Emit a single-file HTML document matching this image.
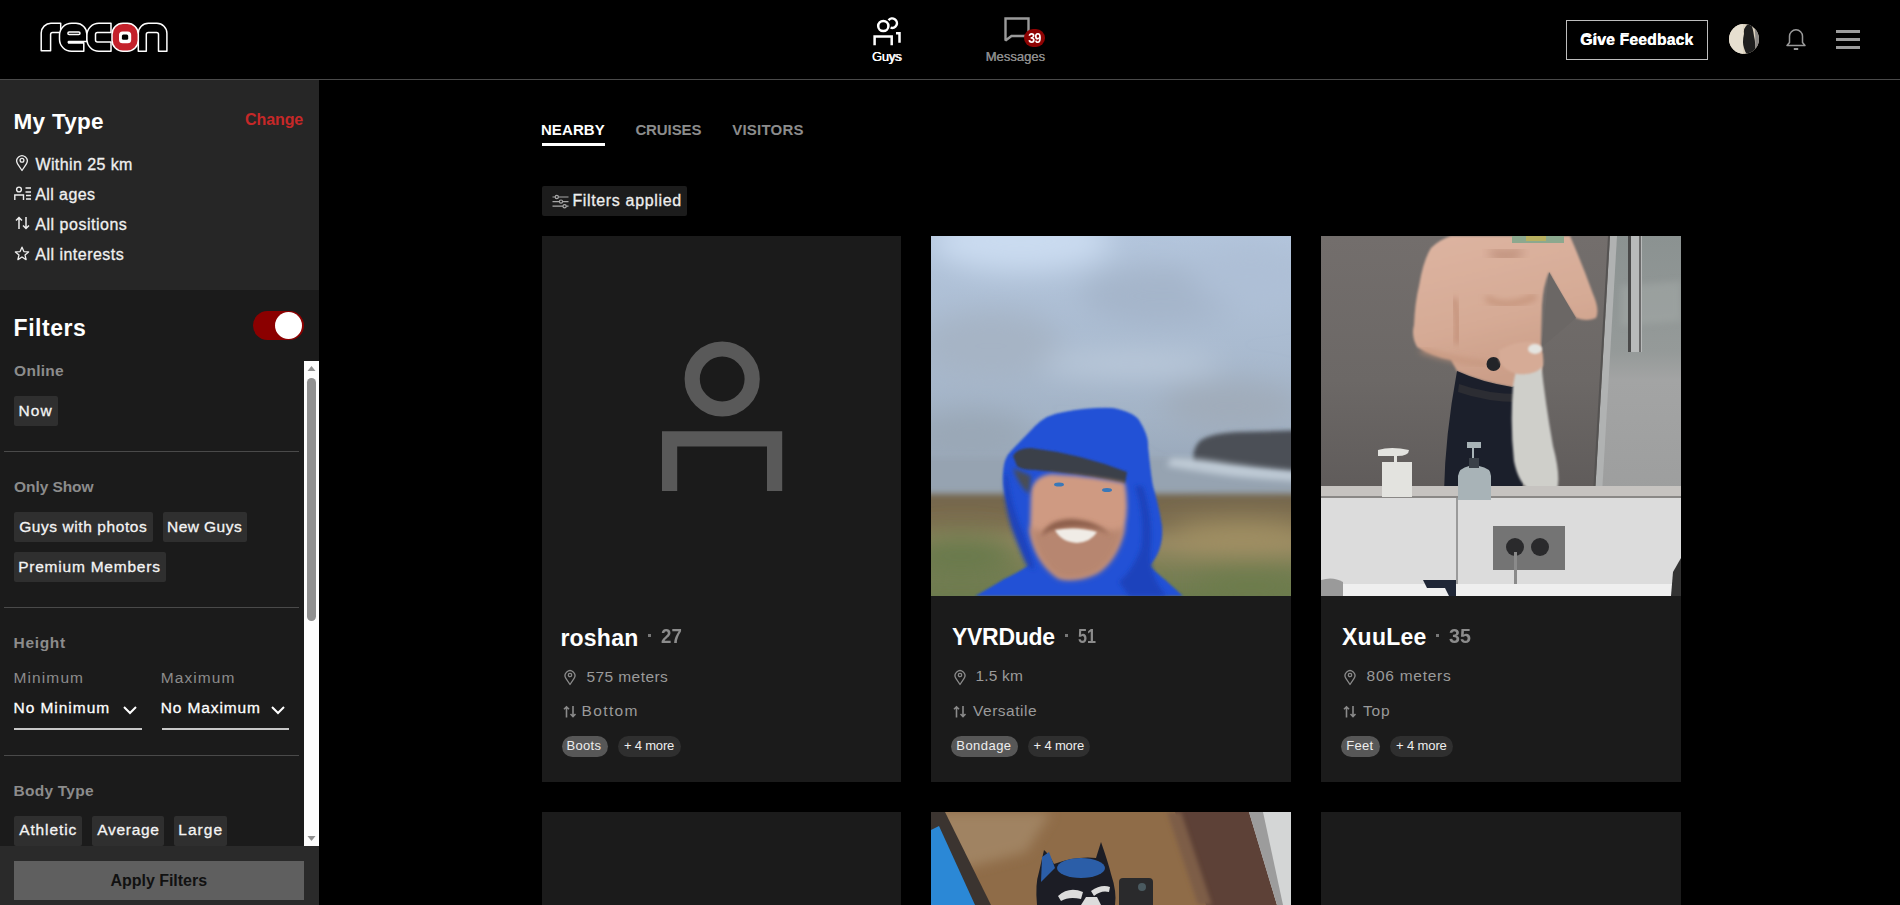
<!DOCTYPE html>
<html><head><meta charset="utf-8">
<style>
*{box-sizing:border-box;margin:0;padding:0}
html,body{width:1900px;height:905px;overflow:hidden;background:#000}
body{position:relative;font-family:"Liberation Sans",sans-serif;color:#fff}
.a{position:absolute;white-space:nowrap}
svg{display:block}
#hdr{position:absolute;left:0;top:0;width:1900px;height:80px;background:#000;border-bottom:1px solid #4a4a4a}
.blk{position:absolute}
.chip{position:absolute;height:30px;background:#2f2f2f;border-radius:2px}
.div{position:absolute;left:4px;width:295px;height:1px;background:#4a4a4a}
.card{position:absolute;width:360px;height:546px;background:#1b1b1b;overflow:hidden}
.tag{position:absolute;height:21px;border-radius:11px}
</style></head>
<body>
<div id="hdr">
  <!-- logo -->
  <svg class="a" style="left:38px;top:18px" width="134" height="38" viewBox="38 18 134 38">
    <g fill="#000" stroke="#fff" stroke-width="1.5" stroke-linejoin="round">
      <path d="M41.2 50.8 V33 A9.8 9.8 0 0 1 51 23.3 H60.7 V32.5 H52.6 Q50.6 32.5 50.6 34.5 V50.8 Z"/>
      <path d="M83.8 51.2 H71.5 A12 12 0 0 1 59.5 39.2 V35.3 A12 12 0 0 1 71.5 23.3 H76 A10.9 10.9 0 0 1 86.9 34.2 V41.6 H68.6 Q67.9 42.25 68.6 42.9 H83.8 Z"/>
      <rect x="67.9" y="31.9" width="12.1" height="2.5" rx="1.25"/>
      <path d="M111 23.3 H98.9 A12 12 0 0 0 86.9 35.3 V39.2 A12 12 0 0 0 98.9 51.2 H111 V41.9 H97.5 Q95.5 41.9 95.5 39.9 V34.5 Q95.5 32.5 97.5 32.5 H111 Z"/>
      <path d="M138.3 51.2 V33.3 A10 10 0 0 1 148.3 23.3 H156.9 A10 10 0 0 1 166.9 33.3 V51.2 H158.5 V34.5 Q158.5 32.5 156.5 32.5 H148.3 Q146.3 32.5 146.3 34.5 V51.2 Z"/>
      <rect x="112" y="23.3" width="26.3" height="27.9" rx="11" fill="#c4212b"/>
    </g>
    <rect x="119" y="31.4" width="12.2" height="11.8" rx="3.5" fill="#fff"/>
    <rect x="121.9" y="34.6" width="6.3" height="5.2" rx="1.5" fill="#000"/>
  </svg>
  <!-- guys -->
  <svg class="a" style="left:866px;top:12px" width="40" height="36" viewBox="866 12 40 36">
    <g fill="none" stroke="#fff" stroke-width="2.5">
      <circle cx="883.3" cy="26" r="5.1"/>
      <path d="M888.6 20.2 A4.7 4.7 0 1 1 890.6 27.6"/>
      <path d="M874.6 45.2 V36.6 H891.7 V45.2"/>
      <path d="M896 33.2 H899.5 V42.8"/>
    </g>
  </svg>
  <div class="a" style="left:872px;top:49px;font-size:13px;color:#fff">Guys</div>
  <!-- messages -->
  <svg class="a" style="left:1002px;top:15px" width="30" height="30" viewBox="0 0 30 30">
    <path d="M3.5 3.5 H26.5 V21 H9.5 L3.5 25.5 Z" fill="none" stroke="#9a9a9a" stroke-width="2.4" stroke-linejoin="miter" stroke-miterlimit="2"/>
  </svg>
  <div class="a" style="left:1024px;top:29px;width:21px;height:18px;border-radius:10px;background:#8e0303"></div><div class="a" style="left:1024px;top:29px;width:21px;height:18px;color:#fff;font-weight:bold;font-size:15px;line-height:18px;text-align:center;letter-spacing:-0.6px;transform:scaleX(0.82)">39</div>
  <div class="a" style="left:986px;top:49px;font-size:13px;color:#8c8c8c">Messages</div>
  <!-- right -->
  <div class="a" style="left:1566px;top:20px;width:142px;height:40px;border:1px solid #bdbdbd;color:#fff;font-weight:bold;font-size:16px;line-height:38px;text-align:center">Give Feedback</div>
  <svg class="a" style="left:1729px;top:24px" width="30" height="30" viewBox="0 0 30 30">
    <defs><clipPath id="avc"><circle cx="15" cy="15" r="15"/></clipPath></defs>
    <g clip-path="url(#avc)">
      <rect width="30" height="30" fill="#ddd3c0"/>
      <rect x="0" y="0" width="14" height="30" fill="#e6dfd0"/>
      <path d="M19 0 Q14 4 15 10 Q13 18 15 24 Q16 28 18 30 H26 Q27 20 25 12 Q24 4 22 0 Z" fill="#1e1e1e"/>
      <path d="M25 0 Q27 10 26 30 H30 V0 Z" fill="#8a8886"/>
    </g>
  </svg>
  <svg class="a" style="left:1784px;top:27px" width="24" height="25" viewBox="0 0 24 25">
    <path d="M3 18.5 L5.5 15.5 V9.3 A6.5 6.5 0 0 1 18.5 9.3 V15.5 L21 18.5 Z" fill="none" stroke="#9a9a9a" stroke-width="1.5" stroke-linejoin="round"/>
    <path d="M9.8 22 H14.2" stroke="#9a9a9a" stroke-width="2"/>
  </svg>
  <div class="a" style="left:1836px;top:30px;width:24px;height:3px;background:#9c9c9c"></div>
  <div class="a" style="left:1836px;top:38px;width:24px;height:3px;background:#9c9c9c"></div>
  <div class="a" style="left:1836px;top:46px;width:24px;height:3px;background:#9c9c9c"></div>
</div>

<div class="blk" style="left:0;top:80px;width:319px;height:210px;background:#262626"></div>
<div class="blk" style="left:0;top:290px;width:319px;height:556px;background:#1b1b1b"></div>
<div class="blk" style="left:0;top:846px;width:319px;height:59px;background:#2a2a2a"></div>
<!-- my type icons -->
<svg class="a" style="left:14px;top:153px" width="16" height="20" viewBox="0 0 16 20">
  <path d="M8 17.5 L3.6 10.8 A5.2 5.2 0 1 1 12.4 10.8 Z" fill="none" stroke="#eee" stroke-width="1.3" stroke-linejoin="round"/>
  <circle cx="8" cy="7.3" r="1.9" fill="none" stroke="#eee" stroke-width="1.3"/>
</svg>
<svg class="a" style="left:13px;top:185px" width="20" height="17" viewBox="0 0 20 17">
  <g fill="none" stroke="#eee" stroke-width="1.4">
    <circle cx="6" cy="4.5" r="2.4"/>
    <path d="M1.8 15 V10 H10.5 V15"/>
    <path d="M12.5 3 H18 M12.5 7 H18 M13 10.5 H18 M13 14 H18"/>
  </g>
</svg>
<svg class="a" style="left:15px;top:216px" width="16" height="14" viewBox="0 0 16 14">
  <g fill="none" stroke="#eee" stroke-width="1.5">
    <path d="M4 13 V1.5 M1 4.5 L4 1.5 L7 4.5"/>
    <path d="M11 1 V12.5 M8 9.5 L11 12.5 L14 9.5"/>
  </g>
</svg>
<svg class="a" style="left:14px;top:246px" width="16" height="15" viewBox="0 0 16 15">
  <path d="M8 1.2 L9.9 5.6 L14.6 5.9 L11 8.9 L12.1 13.6 L8 11 L3.9 13.6 L5 8.9 L1.4 5.9 L6.1 5.6 Z" fill="none" stroke="#eee" stroke-width="1.3" stroke-linejoin="round"/>
</svg>
<!-- toggle -->
<div class="blk" style="left:253px;top:311px;width:51px;height:29px;border-radius:15px;background:#8b0000"></div>
<div class="blk" style="left:275px;top:312px;width:27px;height:27px;border-radius:50%;background:#fff"></div>
<!-- scrollbar -->
<div class="blk" style="left:304px;top:361px;width:15px;height:485px;background:#fdfdfd"></div>
<div class="blk" style="left:307px;top:378px;width:9px;height:243px;border-radius:5px;background:#909090"></div>
<svg class="a" style="left:304px;top:361px" width="15" height="15" viewBox="0 0 15 15"><path d="M3.5 10 L7.5 5 L11.5 10 Z" fill="#909090"/></svg>
<svg class="a" style="left:304px;top:831px" width="15" height="15" viewBox="0 0 15 15"><path d="M3.5 5 L7.5 10 L11.5 5 Z" fill="#909090"/></svg>
<!-- chips -->
<div class="chip" style="left:14px;top:396px;width:44px"></div>
<div class="div" style="top:451px"></div>
<div class="chip" style="left:14px;top:512px;width:139px"></div>
<div class="chip" style="left:163px;top:512px;width:84px"></div>
<div class="chip" style="left:14px;top:552px;width:152px"></div>
<div class="div" style="top:607px"></div>
<div class="blk" style="left:14px;top:728px;width:128px;height:2px;background:#c8c8c8"></div>
<div class="blk" style="left:162px;top:728px;width:127px;height:2px;background:#c8c8c8"></div>
<svg class="a" style="left:122px;top:703px" width="16" height="13" viewBox="0 0 16 13"><path d="M2 4 L8 10 L14 4" fill="none" stroke="#fff" stroke-width="2"/></svg>
<svg class="a" style="left:270px;top:703px" width="16" height="13" viewBox="0 0 16 13"><path d="M2 4 L8 10 L14 4" fill="none" stroke="#fff" stroke-width="2"/></svg>
<div class="div" style="top:755px"></div>
<div class="chip" style="left:14px;top:816px;width:68px"></div>
<div class="chip" style="left:92px;top:816px;width:72px"></div>
<div class="chip" style="left:174px;top:816px;width:53px"></div>
<div class="blk" style="left:14px;top:861px;width:290px;height:39px;background:#5f5f5f"></div>

<!-- tabs underline -->
<div class="blk" style="left:542px;top:143px;width:63px;height:3px;background:#fff"></div>
<!-- filters applied chip -->
<div class="blk" style="left:542px;top:186px;width:145px;height:30px;background:#1c1c1c;border-radius:2px"></div>
<svg class="a" style="left:551.5px;top:193px" width="18" height="18" viewBox="0 0 18 18">
  <g fill="none" stroke="#a8a8a8" stroke-width="1.2">
    <path d="M0.5 4 H3.2 M6.4 4 H16.5"/><circle cx="4.8" cy="4" r="1.6"/>
    <path d="M0.5 8.6 H7.4 M10.6 8.6 H16.5"/><circle cx="9" cy="8.6" r="1.6"/>
    <path d="M0.5 13.2 H11 M14.2 13.2 H16.5"/><circle cx="12.6" cy="13.2" r="1.6"/>
  </g>
</svg>
<!-- cards row 1 -->
<div class="card" style="left:542px;top:236px;width:359px"></div>
<div class="card" style="left:931px;top:236px"></div>
<div class="card" style="left:1321px;top:236px"></div>
<!-- row 2 -->
<div class="card" style="left:542px;top:812px;width:359px;height:93px"></div>
<div class="card" style="left:1321px;top:812px;height:93px"></div>
<!-- placeholder avatar -->
<svg class="a" style="left:660px;top:339px" width="124" height="154" viewBox="0 0 124 154">
  <g fill="none" stroke="#595959" stroke-width="15.2">
    <circle cx="62.2" cy="40" r="30"/>
    <path d="M9.6 152 V99.8 H114.6 V152"/>
  </g>
</svg>
<!-- card icons -->
<svg class="a" style="left:562px;top:668px" width="16" height="18" viewBox="0 0 16 18"><path d="M8 16.5 L3.9 10.3 A4.9 4.9 0 1 1 12.1 10.3 Z" fill="none" stroke="#8a8a8a" stroke-width="1.3" stroke-linejoin="round"/><circle cx="8" cy="7" r="1.7" fill="none" stroke="#8a8a8a" stroke-width="1.3"/></svg>
<svg class="a" style="left:952px;top:668px" width="16" height="18" viewBox="0 0 16 18"><path d="M8 16.5 L3.9 10.3 A4.9 4.9 0 1 1 12.1 10.3 Z" fill="none" stroke="#8a8a8a" stroke-width="1.3" stroke-linejoin="round"/><circle cx="8" cy="7" r="1.7" fill="none" stroke="#8a8a8a" stroke-width="1.3"/></svg>
<svg class="a" style="left:1342px;top:668px" width="16" height="18" viewBox="0 0 16 18"><path d="M8 16.5 L3.9 10.3 A4.9 4.9 0 1 1 12.1 10.3 Z" fill="none" stroke="#8a8a8a" stroke-width="1.3" stroke-linejoin="round"/><circle cx="8" cy="7" r="1.7" fill="none" stroke="#8a8a8a" stroke-width="1.3"/></svg>
<svg class="a" style="left:563px;top:705px" width="14" height="13" viewBox="0 0 14 13"><g fill="none" stroke="#8a8a8a" stroke-width="1.6"><path d="M3.5 12.5 V1.8 M1 4.3 L3.5 1.8 L6 4.3"/><path d="M10 1 V11.5 M7.5 9 L10 11.5 L12.5 9"/></g></svg>
<svg class="a" style="left:953px;top:705px" width="14" height="13" viewBox="0 0 14 13"><g fill="none" stroke="#8a8a8a" stroke-width="1.6"><path d="M3.5 12.5 V1.8 M1 4.3 L3.5 1.8 L6 4.3"/><path d="M10 1 V11.5 M7.5 9 L10 11.5 L12.5 9"/></g></svg>
<svg class="a" style="left:1343px;top:705px" width="14" height="13" viewBox="0 0 14 13"><g fill="none" stroke="#8a8a8a" stroke-width="1.6"><path d="M3.5 12.5 V1.8 M1 4.3 L3.5 1.8 L6 4.3"/><path d="M10 1 V11.5 M7.5 9 L10 11.5 L12.5 9"/></g></svg>
<!-- dots -->
<div class="blk" style="left:648px;top:634px;width:3px;height:3px;background:#777"></div>
<div class="blk" style="left:1065px;top:634px;width:3px;height:3px;background:#777"></div>
<div class="blk" style="left:1436px;top:634px;width:3px;height:3px;background:#777"></div>
<!-- tags -->
<div class="tag" style="left:562px;top:736px;width:46px;background:#575757"></div>
<div class="tag" style="left:618px;top:736px;width:63px;background:#2f2f2f"></div>
<div class="tag" style="left:951px;top:736px;width:67px;background:#575757"></div>
<div class="tag" style="left:1028px;top:736px;width:62px;background:#2f2f2f"></div>
<div class="tag" style="left:1341px;top:736px;width:39px;background:#575757"></div>
<div class="tag" style="left:1390px;top:736px;width:63px;background:#2f2f2f"></div>

<!-- photo 2 : YVRDude -->
<svg class="a" style="left:931px;top:236px" width="360" height="360" viewBox="0 0 360 360">
  <defs>
    <linearGradient id="sky2" x1="0" y1="0" x2="0" y2="1">
      <stop offset="0" stop-color="#b3c5dc"/>
      <stop offset="0.3" stop-color="#aabbd0"/>
      <stop offset="0.5" stop-color="#a3b3c6"/>
      <stop offset="0.6" stop-color="#9cabbd"/>
      <stop offset="0.7" stop-color="#95a3b2"/>
    </linearGradient>
    <linearGradient id="gr2" x1="0" y1="0" x2="0" y2="1">
      <stop offset="0" stop-color="#73654c"/>
      <stop offset="0.25" stop-color="#7e6f50"/>
      <stop offset="0.45" stop-color="#978962"/>
      <stop offset="0.7" stop-color="#7a7f55"/>
      <stop offset="1" stop-color="#6a7a4d"/>
    </linearGradient>
    <filter id="bl6" x="-30%" y="-30%" width="160%" height="160%"><feGaussianBlur stdDeviation="6"/></filter>
    <filter id="bl14" x="-50%" y="-50%" width="200%" height="200%"><feGaussianBlur stdDeviation="14"/></filter>
    <filter id="bl3" x="-20%" y="-20%" width="140%" height="140%"><feGaussianBlur stdDeviation="3"/></filter>
    <filter id="bl2" x="-20%" y="-20%" width="140%" height="140%"><feGaussianBlur stdDeviation="2"/></filter>
    <filter id="bl1" x="-20%" y="-20%" width="140%" height="140%"><feGaussianBlur stdDeviation="1"/></filter>
  </defs>
  <rect width="360" height="360" fill="url(#sky2)"/>
  <g filter="url(#bl14)">
    <ellipse cx="90" cy="5" rx="90" ry="30" fill="#cadbf0"/>
    <ellipse cx="230" cy="60" rx="80" ry="30" fill="#a5b5ca"/>
    <ellipse cx="320" cy="40" rx="60" ry="30" fill="#aebfd6"/>
    <ellipse cx="60" cy="110" rx="70" ry="35" fill="#a6b4c5"/>
    <ellipse cx="200" cy="128" rx="90" ry="12" fill="#bccadb"/>
    <ellipse cx="300" cy="170" rx="70" ry="25" fill="#a0acba"/>
    <ellipse cx="40" cy="200" rx="60" ry="25" fill="#9aa7b6"/>
  </g>
  <rect x="-10" y="222" width="380" height="42" fill="#96a3b1" filter="url(#bl3)"/>
  <path d="M263 229 Q260 212 270 204 Q282 197 305 196 L380 194 V238 Q320 233 263 229 Z" fill="#4b5056" filter="url(#bl2)"/>
  <path d="M240 222 Q268 222 300 228 Q335 233 380 237 V246 Q322 243 292 239 Q258 234 236 230 Z" fill="#bfcbd6" filter="url(#bl3)"/>
  <rect x="-10" y="258" width="380" height="110" fill="url(#gr2)" filter="url(#bl3)"/>
  <g filter="url(#bl14)">
    <ellipse cx="30" cy="320" rx="60" ry="22" fill="#67794c"/>
    <ellipse cx="310" cy="300" rx="70" ry="14" fill="#a39163"/>
    <ellipse cx="320" cy="350" rx="60" ry="16" fill="#6c7c4c"/>
  </g>
  <!-- hood -->
  <path d="M44 360 Q62 350 73 343 Q92 334 99 328 Q90 305 84 284 Q72 262 72 240 Q72 222 80 215 L104 190 Q116 178 133 176 Q160 171 182 172 Q202 176 208 184 Q218 200 217 210 Q220 240 222 250 Q228 270 231 290 Q233 315 218 330 Q236 345 252 360 Z" fill="#2251d6" filter="url(#bl1)"/>
  <path d="M76 236 Q80 270 92 296 Q100 318 104 334 L96 330 Q86 308 80 290 Q72 264 74 240 Z" fill="#1b42bd" filter="url(#bl2)"/>
  <path d="M204 250 Q214 280 210 312 Q202 334 188 346 L198 360 L236 360 Q216 338 220 310 Q222 280 212 250 Z" fill="#1b43bc" filter="url(#bl2)"/>
  <path d="M82 220 Q86 212 100 212 Q150 218 196 236 L194 248 Q150 238 104 234 Q90 234 86 230 Z" fill="#3b3f48" filter="url(#bl1)"/>
  <!-- face -->
  <path d="M100 254 Q104 240 120 238 Q160 240 194 247 Q198 270 194 290 Q186 325 165 337 Q145 346 128 342 Q104 326 99 295 Z" fill="#cf9a82" filter="url(#bl2)"/>
  <path d="M99 290 Q112 300 124 292 Q146 286 170 292 Q184 298 193 290 Q188 322 166 337 Q146 346 128 342 Q104 326 99 290 Z" fill="#b78670" filter="url(#bl3)"/>
  <path d="M110 300 Q116 284 140 283 Q166 284 180 300 Q170 292 146 291 Q124 291 110 300 Z" fill="#8d5f4c" filter="url(#bl2)"/>
  <path d="M124 294 Q146 290 166 296 Q160 306 146 307 Q130 306 124 294 Z" fill="#f0ece6" filter="url(#bl1)"/>
  <path d="M82 232 Q88 250 98 258 L100 240 Z" fill="#4a4d55" filter="url(#bl2)"/>
  <ellipse cx="128" cy="248.5" rx="5" ry="2" fill="#3a78b8"/>
  <ellipse cx="176" cy="254" rx="5" ry="2" fill="#3a78b8"/>
</svg>

<!-- photo 3 : XuuLee -->
<svg class="a" style="left:1321px;top:236px" width="360" height="360" viewBox="0 0 360 360">
  <defs>
    <linearGradient id="door3" x1="0" y1="0" x2="0" y2="1">
      <stop offset="0" stop-color="#8b9291"/>
      <stop offset="0.45" stop-color="#959a99"/>
      <stop offset="0.56" stop-color="#a3a4a4"/>
      <stop offset="1" stop-color="#9d9e9e"/>
    </linearGradient>
    <linearGradient id="wall3" x1="0" y1="0" x2="0" y2="1">
      <stop offset="0" stop-color="#736e6c"/>
      <stop offset="0.4" stop-color="#6c6866"/>
      <stop offset="0.72" stop-color="#5f5b5a"/>
    </linearGradient>
    <linearGradient id="skin3" x1="0" y1="0" x2="0.3" y2="1">
      <stop offset="0" stop-color="#ddb4a1"/>
      <stop offset="0.6" stop-color="#d6ab96"/>
      <stop offset="1" stop-color="#cb9e88"/>
    </linearGradient>
  </defs>
  <rect width="360" height="360" fill="url(#wall3)"/>
  <!-- door -->
  <path d="M293 0 H360 V258 H277 Z" fill="url(#door3)"/>
  <path d="M300 50 L360 45 V85 L300 90 Z" fill="#a4aaa8" opacity="0.5" filter="url(#bl3)"/>
  <path d="M289 0 H296 L281 258 H274 Z" fill="#b0b2b2"/>
  <path d="M287 0 H289 L274 258 H272 Z" fill="#555352"/>
  <rect x="307" y="0" width="14" height="116" fill="#b8baba"/>
  <rect x="307" y="0" width="3" height="116" fill="#4a4a4a"/>
  <rect x="318" y="0" width="2" height="116" fill="#6a6a6a"/>
  <!-- skin -->
  <path d="M129.7 0 H249 Q262 30 272 58 Q279 74 275 82 Q266 86 255 82 Q240 60 228 36 Q222 50 221 70 L220 108 Q219 124 221 133 L219 139 Q205 148 191 151 Q160 146 136 135 L130 124 Q112 121 96 111 Q90 100 93 89 Q94 66 98 50 Q102 25 110 12 Q118 4 129.7 0 Z" fill="url(#skin3)" filter="url(#bl1)"/>
  <path d="M228 36 L255 82 L221 111 Z" fill="#6b6765"/>
  <path d="M133 62 Q138 85 136 108" fill="none" stroke="#c08c74" stroke-width="5" filter="url(#bl3)"/>
  <path d="M100 114 Q130 124 166 128" fill="none" stroke="#c4947c" stroke-width="4" filter="url(#bl3)"/>
  <path d="M165 62 Q185 75 215 60" fill="none" stroke="#c6947c" stroke-width="6" filter="url(#bl3)"/>
  <path d="M170 15 Q185 25 200 15" fill="none" stroke="#b48470" stroke-width="8" filter="url(#bl6)"/>
  <rect x="191" y="0" width="52" height="7" fill="#8ca88e"/>
  <rect x="205" y="0" width="20" height="5" fill="#b8b060"/>
  <circle cx="172.5" cy="128" r="7" fill="#222428"/>
  <!-- pants -->
  <path d="M136 135 Q160 146 191 151 Q205 148 219 139 Q214 200 200 256 L123 256 Q124 200 136 135 Z" fill="#1b1f2b"/>
  <path d="M138 148 Q165 158 200 158 L199 166 Q165 166 137 156 Z" fill="#2c2d33"/>
  <!-- towel -->
  <path d="M204 118 Q216 116 220 126 Q224 165 232 210 Q240 240 236 254 L212 256 Q198 250 193 225 Q189 190 192 150 Q196 125 204 118 Z" fill="#cfcfca" filter="url(#bl1)"/>
  <path d="M178 114 Q196 104 214 106 Q224 112 222 130 Q214 140 196 138 Q182 134 178 124 Z" fill="#d6ab96" filter="url(#bl1)"/>
  <ellipse cx="214" cy="113" rx="7" ry="5" fill="#e4e4e0" filter="url(#bl1)"/>
  <!-- ledge + sink -->
  <rect x="0" y="250" width="360" height="11" fill="#c6c3c0"/>
  <rect x="0" y="260" width="360" height="2" fill="#8a8886"/>
  <rect x="0" y="262" width="360" height="86" fill="#dcdcdc"/>
  <rect x="135" y="262" width="2" height="86" fill="#9a9a9a"/>
  <rect x="172" y="290" width="72" height="44" fill="#747474"/>
  <circle cx="194" cy="311" r="9" fill="#2a2a2c"/>
  <circle cx="219" cy="311" r="9" fill="#2a2a2c"/>
  <rect x="193" y="316" width="3" height="44" fill="#8a8a8a"/>
  <rect x="0" y="348" width="360" height="12" fill="#efefef"/>
  <path d="M102 344 H135 V360 H128 L124 352 H106 Z" fill="#1f2636"/>
  <path d="M0 344 Q12 340 22 346 V360 H0 Z" fill="#9a9a9a"/>
  <path d="M352 336 L360 322 V360 H350 Z" fill="#333"/>
  <!-- bottles -->
  <path d="M57 214 Q70 210 88 214 Q88 220 76 220 V226 H91 V261 H61 V226 H73 V220 H57 Z" fill="#e3e3df"/>
  <path d="M146 206 H160 V212 H153 V222 Q158 224 158 230 Q170 232 170 240 V264 H137 V240 Q138 232 148 230 Q148 224 151 222 V212 H146 Z" fill="#a8b3b7"/>
  <rect x="148" y="222" width="10" height="10" fill="#3a4048"/>
</svg>

<!-- photo 4 : row 2 -->
<svg class="a" style="left:931px;top:812px" width="360" height="93" viewBox="0 0 360 93">
  <rect width="360" height="93" fill="#8f6c48"/>
  <path d="M0 0 H120 L95 40 L20 60 Z" fill="#a08362" filter="url(#bl6)"/>
  <path d="M0 0 H14 L60 93 H0 Z" fill="#3b3430"/>
  <path d="M0 18 L8 14 L44 93 H0 Z" fill="#2b88d6"/>
  <path d="M244 0 H320 L346 93 H275 Z" fill="#5d4137"/>
  <path d="M236 0 H250 L281 93 H267 Z" fill="#7d5d46" filter="url(#bl2)"/>
  <path d="M318 0 H360 V93 H346 Z" fill="#d4d6d6"/>
  <path d="M318 0 H332 L352 93 H346 Z" fill="#9c9c9c"/>
  <!-- mask -->
  <path d="M106 93 Q104 72 108 60 L113 38 Q118 42 123 52 Q145 44 165 46 L170 30 Q177 50 180 62 Q186 80 184 93 Z" fill="#1c1d25"/>
  <ellipse cx="150" cy="56" rx="24" ry="10" fill="#2b5ea8"/>
  <path d="M111 45 L118 40 L124 56 L110 70 Z" fill="#2b5ea8"/>
  <path d="M127 84 Q138 74 152 80 L150 87 Q138 84 130 89 Z" fill="#dcdcdc"/>
  <path d="M160 79 Q170 72 179 75 L178 80 Q170 78 163 84 Z" fill="#dcdcdc"/>
  <path d="M155 85 L166 85 L170 93 L150 93 Z" fill="#dcdcdc"/>
  <rect x="188" y="66" width="34" height="30" rx="4" fill="#2a2a2c"/>
  <circle cx="211" cy="75" r="4" fill="#4a5a60"/>
</svg>

<div class="a" style="left:872.0px;top:50.0px;font-size:13px;line-height:13px;font-weight:normal;color:#fff;letter-spacing:-0.48px;">Guys</div>
<div class="a" style="left:985.5px;top:50.0px;font-size:13px;line-height:13px;font-weight:normal;color:#8c8c8c;letter-spacing:0.04px;">Messages</div>
<div class="a" style="left:13.6px;top:111.0px;font-size:22.5px;line-height:22.5px;font-weight:bold;color:#fff;letter-spacing:0.26px;">My Type</div>
<div class="a" style="left:245.0px;top:112.0px;font-size:16px;line-height:16px;font-weight:bold;color:#c62828;letter-spacing:-0.09px;">Change</div>
<div class="a" style="left:35.4px;top:156.5px;font-size:16px;line-height:16px;font-weight:normal;color:#f0f0f0;letter-spacing:0.41px;-webkit-text-stroke:0.3px #f0f0f0;">Within 25 km</div>
<div class="a" style="left:35.3px;top:186.5px;font-size:16px;line-height:16px;font-weight:normal;color:#f0f0f0;letter-spacing:0.40px;-webkit-text-stroke:0.3px #f0f0f0;">All ages</div>
<div class="a" style="left:35.3px;top:216.5px;font-size:16px;line-height:16px;font-weight:normal;color:#f0f0f0;letter-spacing:0.51px;-webkit-text-stroke:0.3px #f0f0f0;">All positions</div>
<div class="a" style="left:35.3px;top:246.5px;font-size:16px;line-height:16px;font-weight:normal;color:#f0f0f0;letter-spacing:0.48px;-webkit-text-stroke:0.3px #f0f0f0;">All interests</div>
<div class="a" style="left:13.6px;top:316.5px;font-size:23px;line-height:23px;font-weight:bold;color:#fff;letter-spacing:0.53px;">Filters</div>
<div class="a" style="left:14.1px;top:362.9px;font-size:15.5px;line-height:15.5px;font-weight:bold;color:#8c8c8c;letter-spacing:0.26px;">Online</div>
<div class="a" style="left:18.4px;top:402.9px;font-size:15.5px;line-height:15.5px;font-weight:normal;color:#f4f4f4;letter-spacing:1.19px;-webkit-text-stroke:0.3px #f4f4f4;">Now</div>
<div class="a" style="left:14.1px;top:478.9px;font-size:15.5px;line-height:15.5px;font-weight:bold;color:#8c8c8c;letter-spacing:-0.09px;">Only Show</div>
<div class="a" style="left:19.2px;top:518.9px;font-size:15.5px;line-height:15.5px;font-weight:normal;color:#f4f4f4;letter-spacing:0.58px;-webkit-text-stroke:0.3px #f4f4f4;">Guys with photos</div>
<div class="a" style="left:167.0px;top:518.9px;font-size:15.5px;line-height:15.5px;font-weight:normal;color:#f4f4f4;letter-spacing:0.45px;-webkit-text-stroke:0.3px #f4f4f4;">New Guys</div>
<div class="a" style="left:18.2px;top:558.9px;font-size:15.5px;line-height:15.5px;font-weight:normal;color:#f4f4f4;letter-spacing:0.77px;-webkit-text-stroke:0.3px #f4f4f4;">Premium Members</div>
<div class="a" style="left:13.5px;top:635.3px;font-size:15.5px;line-height:15.5px;font-weight:bold;color:#8c8c8c;letter-spacing:0.69px;">Height</div>
<div class="a" style="left:13.5px;top:670.0px;font-size:15.5px;line-height:15.5px;font-weight:normal;color:#8c8c8c;letter-spacing:1.11px;">Minimum</div>
<div class="a" style="left:160.8px;top:670.0px;font-size:15.5px;line-height:15.5px;font-weight:normal;color:#8c8c8c;letter-spacing:1.06px;">Maximum</div>
<div class="a" style="left:13.5px;top:699.5px;font-size:15.5px;line-height:15.5px;font-weight:normal;color:#fff;letter-spacing:0.96px;-webkit-text-stroke:0.3px #fff;">No Minimum</div>
<div class="a" style="left:160.8px;top:699.5px;font-size:15.5px;line-height:15.5px;font-weight:normal;color:#fff;letter-spacing:0.87px;-webkit-text-stroke:0.3px #fff;">No Maximum</div>
<div class="a" style="left:13.5px;top:782.6px;font-size:15.5px;line-height:15.5px;font-weight:bold;color:#8c8c8c;letter-spacing:0.25px;">Body Type</div>
<div class="a" style="left:19.2px;top:822.4px;font-size:15.5px;line-height:15.5px;font-weight:normal;color:#f4f4f4;letter-spacing:0.89px;-webkit-text-stroke:0.3px #f4f4f4;">Athletic</div>
<div class="a" style="left:97.3px;top:822.4px;font-size:15.5px;line-height:15.5px;font-weight:normal;color:#f4f4f4;letter-spacing:0.69px;-webkit-text-stroke:0.3px #f4f4f4;">Average</div>
<div class="a" style="left:178.2px;top:822.4px;font-size:15.5px;line-height:15.5px;font-weight:normal;color:#f4f4f4;letter-spacing:1.09px;-webkit-text-stroke:0.3px #f4f4f4;">Large</div>
<div class="a" style="left:110.5px;top:872.5px;font-size:16px;line-height:16px;font-weight:bold;color:#111;letter-spacing:-0.03px;">Apply Filters</div>
<div class="a" style="left:1580.0px;top:31.9px;font-size:15.5px;line-height:15.5px;font-weight:bold;color:#fff;letter-spacing:0.31px;">Give Feedback</div>
<div class="a" style="left:540.9px;top:122.1px;font-size:15px;line-height:15px;font-weight:bold;color:#fff;letter-spacing:0.11px;">NEARBY</div>
<div class="a" style="left:635.4px;top:122.1px;font-size:15px;line-height:15px;font-weight:bold;color:#8c8c8c;letter-spacing:-0.10px;">CRUISES</div>
<div class="a" style="left:732.2px;top:122.1px;font-size:15px;line-height:15px;font-weight:bold;color:#8c8c8c;letter-spacing:0.24px;">VISITORS</div>
<div class="a" style="left:572.4px;top:192.7px;font-size:16px;line-height:16px;font-weight:normal;color:#eee;letter-spacing:0.65px;-webkit-text-stroke:0.3px #eee;">Filters applied</div>
<div class="a" style="left:560.4px;top:626.8px;font-size:23px;line-height:23px;font-weight:bold;color:#fff;letter-spacing:0.23px;">roshan</div>
<div class="a" style="left:661.0px;top:625.6px;font-size:20.5px;line-height:20.5px;font-weight:bold;color:#8c8c8c;transform:scaleX(0.911);transform-origin:0 0;">27</div>
<div class="a" style="left:586.4px;top:668.6px;font-size:15.5px;line-height:15.5px;font-weight:normal;color:#9a9a9a;letter-spacing:0.43px;">575 meters</div>
<div class="a" style="left:581.6px;top:703.3px;font-size:15.5px;line-height:15.5px;font-weight:normal;color:#9a9a9a;letter-spacing:1.36px;">Bottom</div>
<div class="a" style="left:566.6px;top:738.8px;font-size:13px;line-height:13px;font-weight:normal;color:#eee;letter-spacing:0.26px;">Boots</div>
<div class="a" style="left:624.0px;top:738.8px;font-size:13px;line-height:13px;font-weight:normal;color:#eee;letter-spacing:-0.20px;">+ 4 more</div>
<div class="a" style="left:952.0px;top:626.3px;font-size:23px;line-height:23px;font-weight:bold;color:#fff;letter-spacing:-0.28px;">YVRDude</div>
<div class="a" style="left:1077.6px;top:625.6px;font-size:20.5px;line-height:20.5px;font-weight:bold;color:#8c8c8c;transform:scaleX(0.786);transform-origin:0 0;">51</div>
<div class="a" style="left:975.6px;top:667.9px;font-size:15.5px;line-height:15.5px;font-weight:normal;color:#9a9a9a;letter-spacing:0.16px;">1.5 km</div>
<div class="a" style="left:973.0px;top:702.7px;font-size:15.5px;line-height:15.5px;font-weight:normal;color:#9a9a9a;letter-spacing:0.52px;">Versatile</div>
<div class="a" style="left:956.3px;top:738.8px;font-size:13px;line-height:13px;font-weight:normal;color:#eee;letter-spacing:0.45px;">Bondage</div>
<div class="a" style="left:1033.5px;top:738.8px;font-size:13px;line-height:13px;font-weight:normal;color:#eee;letter-spacing:-0.15px;">+ 4 more</div>
<div class="a" style="left:1342.0px;top:626.3px;font-size:23px;line-height:23px;font-weight:bold;color:#fff;letter-spacing:0.26px;">XuuLee</div>
<div class="a" style="left:1449.0px;top:625.6px;font-size:20.5px;line-height:20.5px;font-weight:bold;color:#8c8c8c;transform:scaleX(0.960);transform-origin:0 0;">35</div>
<div class="a" style="left:1366.6px;top:667.9px;font-size:15.5px;line-height:15.5px;font-weight:normal;color:#9a9a9a;letter-spacing:0.73px;">806 meters</div>
<div class="a" style="left:1363.0px;top:702.7px;font-size:15.5px;line-height:15.5px;font-weight:normal;color:#9a9a9a;letter-spacing:0.76px;">Top</div>
<div class="a" style="left:1346.3px;top:738.8px;font-size:13px;line-height:13px;font-weight:normal;color:#eee;letter-spacing:0.27px;">Feet</div>
<div class="a" style="left:1396.0px;top:738.8px;font-size:13px;line-height:13px;font-weight:normal;color:#eee;letter-spacing:-0.12px;">+ 4 more</div>
</body></html>
